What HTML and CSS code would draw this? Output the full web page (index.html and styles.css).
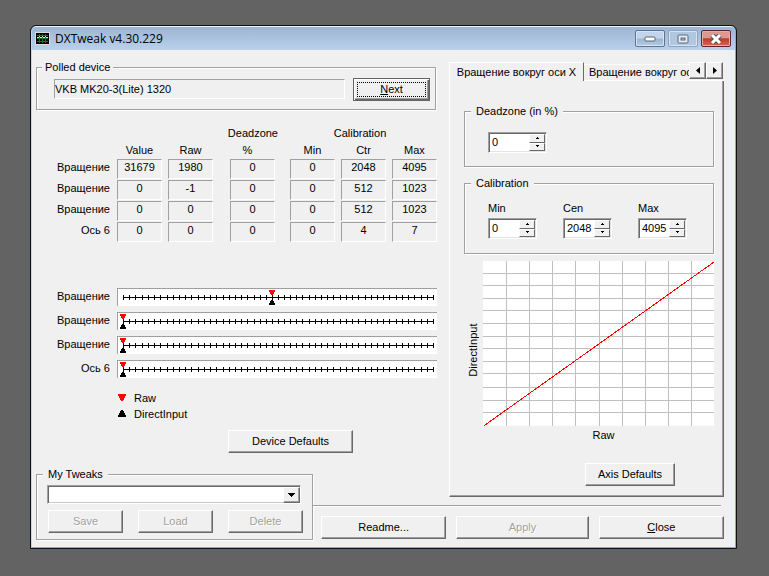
FILE: index.html
```html
<!DOCTYPE html>
<html lang="en">
<head>
<meta charset="utf-8">
<title>DXTweak v4.30.229</title>
<link rel="stylesheet" href="styles.css">
</head>
<body>
<svg class="defs" aria-hidden="true">
  <symbol id="ruler" viewBox="0 0 320 17">
    <g fill="none" stroke="#000" shape-rendering="crispEdges">
      <path d="M5 8.500H317"/>
      <path d="M5.500 6v5M11.500 6v5M17.500 6v5M24.500 6v5M30.500 6v5M36.500 6v5M42.500 6v5M49.500 6v5M55.500 6v5M61.500 6v5M67.500 6v5M73.500 6v5M80.500 6v5M86.500 6v5M92.500 6v5M98.500 6v5M105.500 6v5M111.500 6v5M117.500 6v5M123.500 6v5M129.500 6v5M136.500 6v5M142.500 6v5M148.500 6v5M154.500 6v5M161.500 6v5M167.500 6v5M173.500 6v5M179.500 6v5M185.500 6v5M192.500 6v5M198.500 6v5M204.500 6v5M210.500 6v5M216.500 6v5M223.500 6v5M229.500 6v5M235.500 6v5M241.500 6v5M248.500 6v5M254.500 6v5M260.500 6v5M266.500 6v5M272.500 6v5M279.500 6v5M285.500 6v5M291.500 6v5M297.500 6v5M304.500 6v5M310.500 6v5M316.500 6v5"/>
    </g>
  </symbol>
  <symbol id="markers" viewBox="0 0 7 17">
    <path fill="#f00" shape-rendering="crispEdges" d="M0 1h6v2h-1v2h-1v1h-2v-1h-1v-2h-1z"/>
    <path fill="#000" shape-rendering="crispEdges" d="M2 11h2v1h1v2h1v2h-6v-2h1v-2h1z"/>
  </symbol>
  <symbol id="up" viewBox="0 0 5 3"><path shape-rendering="crispEdges" d="M2 0h1v1h1v1h-3v-1h1z"/></symbol>
  <symbol id="down" viewBox="0 0 5 3"><path shape-rendering="crispEdges" d="M1 0h3v1h-1v1h-1v-1h-1z"/></symbol>
</svg>
<main class="window">
  <header class="titlebar">
    <svg class="app-icon" width="15" height="13" viewBox="0 0 15 13" shape-rendering="crispEdges" aria-hidden="true">
      <path fill="#ddd" d="M0 0h15v13H0z"/><path d="M1 1h13v11H1z"/>
      <path stroke="#0b7a1c" fill="none" d="M4.500 2v9M7.500 2v9M10.500 2v9M2 3.500h11M2 6.500h11M2 9.500h11"/>
      <path stroke="#c7f4c8" fill="none" d="M2 5.500h2M4 4.500h1M5 5.500h2M7 4.500h1M8 5.500h2M10 4.500h1M11 5.500h2"/>
    </svg>
    <h1>DXTweak v4.30.229</h1>
    <div class="controls">
      <button class="ctl" aria-label="Minimize"><svg width="12" height="6" viewBox="0 0 12 6"><rect x="1" y="1" width="10" height="4" rx="1" fill="#fff" stroke="#5b6675"/></svg></button>
      <button class="ctl dim" aria-label="Maximize" disabled><svg width="12" height="10" viewBox="0 0 12 10"><rect x="1" y="1" width="10" height="8" rx="1" fill="#e5ebf3" stroke="#5d6878"/><rect x="4" y="4" width="4" height="2" fill="#a9c0dd" stroke="#5d6878"/></svg></button>
      <button class="ctl close" aria-label="Close window"><svg width="12" height="10" viewBox="0 0 12 10"><path d="M2 1l8 8M10 1l-8 8" stroke="#5d5057" stroke-width="5"/><path d="M2 1l8 8M10 1l-8 8" stroke="#fff" stroke-width="3"/></svg></button>
    </div>
  </header>

  <div class="client">
    <section class="device">
      <fieldset class="polled">
        <legend>Polled device</legend>
        <input class="device-name" aria-label="Polled device" value="VKB MK20-3(Lite) 1320" readonly>
        <button class="btn default"><span class="focus"><u>N</u>ext</span></button>
      </fieldset>

      <table class="axes">
        <colgroup><col><col class="c"><col class="c-raw"><col class="c-dz"><col class="c"><col class="c"><col class="c-last"></colgroup>
        <thead>
          <tr><td></td><td></td><td></td><th>Deadzone</th><th class="group" colspan="3">Calibration</th></tr>
          <tr><td></td><th>Value</th><th>Raw</th><th>%</th><th>Min</th><th>Ctr</th><th>Max</th></tr>
        </thead>
        <tbody>
          <tr><th>Вращение</th><td><span>31679</span></td><td><span>1980</span></td><td><span>0</span></td><td><span>0</span></td><td><span>2048</span></td><td><span>4095</span></td></tr>
          <tr><th>Вращение</th><td><span>0</span></td><td><span>-1</span></td><td><span>0</span></td><td><span>0</span></td><td><span>512</span></td><td><span>1023</span></td></tr>
          <tr><th>Вращение</th><td><span>0</span></td><td><span>0</span></td><td><span>0</span></td><td><span>0</span></td><td><span>512</span></td><td><span>1023</span></td></tr>
          <tr><th>Ось 6</th><td><span>0</span></td><td><span>0</span></td><td><span>0</span></td><td><span>0</span></td><td><span>4</span></td><td><span>7</span></td></tr>
        </tbody>
      </table>

      <div class="rulers">
        <div class="ruler-row"><span>Вращение</span><svg class="ruler" viewBox="0 0 320 17"><use href="#ruler" width="320" height="17"/><use href="#markers" x="151" width="7" height="17"/></svg></div>
        <div class="ruler-row"><span>Вращение</span><svg class="ruler" viewBox="0 0 320 17"><use href="#ruler" width="320" height="17"/><use href="#markers" x="2" width="7" height="17"/></svg></div>
        <div class="ruler-row"><span>Вращение</span><svg class="ruler" viewBox="0 0 320 17"><use href="#ruler" width="320" height="17"/><use href="#markers" x="2" width="7" height="17"/></svg></div>
        <div class="ruler-row"><span>Ось 6</span><svg class="ruler" viewBox="0 0 320 17"><use href="#ruler" width="320" height="17"/><use href="#markers" x="2" width="7" height="17"/></svg></div>
      </div>

      <ul class="key">
        <li><svg width="8" height="7" viewBox="0 0 8 7" shape-rendering="crispEdges"><path fill="#f00" d="M0 0h8v2h-1v2h-1v2h-1v1h-2v-1h-1v-2h-1v-2h-1z"/></svg>Raw</li>
        <li><svg width="8" height="7" viewBox="0 0 8 7" shape-rendering="crispEdges"><path d="M3 0h2v1h1v2h1v2h1v2h-8v-2h1v-2h1v-2h1z"/></svg>DirectInput</li>
      </ul>
      <button class="btn device-defaults">Device Defaults</button>
    </section>

    <section class="axis-tabs">
      <div class="tabs" role="tablist">
        <button class="tab active" role="tab" aria-selected="true">Вращение вокруг оси X</button>
        <button class="tab" role="tab" aria-selected="false">Вращение вокруг оси Y</button>
        <div class="tab-scroll">
          <button aria-label="Previous tabs"><svg width="4" height="7" viewBox="0 0 4 7"><path d="M4 0v7L0 3.500z"/></svg></button>
          <button aria-label="Next tabs"><svg width="4" height="7" viewBox="0 0 4 7"><path d="M0 0v7l4-3.500z"/></svg></button>
        </div>
      </div>
      <div class="panel">
        <fieldset class="deadzone">
          <legend>Deadzone (in %)</legend>
          <div class="spin wide"><input aria-label="Deadzone (in %)" value="0"><div class="arrows"><button aria-label="Increase"><svg width="5" height="3"><use href="#up"/></svg></button><button aria-label="Decrease"><svg width="5" height="3"><use href="#down"/></svg></button></div></div>
        </fieldset>
        <fieldset class="calibration">
          <legend>Calibration</legend>
          <div class="field"><label for="min">Min</label><div class="spin"><input id="min" value="0"><div class="arrows"><button aria-label="Increase min"><svg width="5" height="3"><use href="#up"/></svg></button><button aria-label="Decrease min"><svg width="5" height="3"><use href="#down"/></svg></button></div></div></div>
          <div class="field"><label for="cen">Cen</label><div class="spin"><input id="cen" value="2048"><div class="arrows"><button aria-label="Increase center"><svg width="5" height="3"><use href="#up"/></svg></button><button aria-label="Decrease center"><svg width="5" height="3"><use href="#down"/></svg></button></div></div></div>
          <div class="field"><label for="max">Max</label><div class="spin"><input id="max" value="4095"><div class="arrows"><button aria-label="Increase max"><svg width="5" height="3"><use href="#up"/></svg></button><button aria-label="Decrease max"><svg width="5" height="3"><use href="#down"/></svg></button></div></div></div>
        </fieldset>
        <div class="chart">
          <span class="y-label">DirectInput</span>
          <svg class="plot" viewBox="0 0 230 164">
            <path fill="#fff" d="M0 0h230v164H0z"/>
            <path fill="none" stroke="#c0c0c0" shape-rendering="crispEdges" d="M23.500 0v164M46.500 0v164M69.500 0v164M92.500 0v164M115.500 0v164M138.500 0v164M161.500 0v164M184.500 0v164M207.500 0v164M0 12.500h230M0 24.500h230M0 37.500h230M0 49.500h230M0 62.500h230M0 75.500h230M0 87.500h230M0 100.500h230M0 112.500h230M0 125.500h230M0 138.500h230M0 150.500h230"/>
            <path fill="none" stroke="#f00" shape-rendering="crispEdges" d="M1 164L230 1"/>
          </svg>
          <span class="x-label">Raw</span>
        </div>
        <button class="btn axis-defaults">Axis Defaults</button>
      </div>
    </section>

    <fieldset class="tweaks">
      <legend>My Tweaks</legend>
      <div class="combo">
        <select aria-label="My Tweaks"><option></option></select>
        <span class="drop"><svg width="7" height="4" viewBox="0 0 7 4" shape-rendering="crispEdges"><path d="M0 0h7v1h-1v1h-1v1h-1v1h-1v-1h-1v-1h-1v-1h-1z"/></svg></span>
      </div>
      <div class="tweak-buttons">
        <button class="btn" disabled>Save</button>
        <button class="btn" disabled>Load</button>
        <button class="btn" disabled>Delete</button>
      </div>
    </fieldset>

    <footer class="actions">
      <hr>
      <div class="action-buttons">
        <button class="btn">Readme...</button>
        <button class="btn apply" disabled>Apply</button>
        <button class="btn"><span><u>C</u>lose</span></button>
      </div>
    </footer>
  </div>
</main>
</body>
</html>
```
FILE: styles.css
```css
* { box-sizing: border-box; }

body {
  margin: 0;
  min-height: 100vh;
  padding: 25px 32px 27px 30px;
  display: flex;
  background: #636363;
  color: #000;
  font: 11px/13px "Liberation Sans", Arial, sans-serif;
}

button, input, select { font: inherit; color: inherit; margin: 0; border-radius: 0; }
button { padding: 0; }
svg { display: block; }
.defs { position: absolute; width: 0; height: 0; }

.window {
  flex: 1;
  display: flex;
  flex-direction: column;
  border: 1px solid;
  border-color: #e9f3fc #4fc3ee #4fc3ee #b5dcf5;
  outline: 1px solid #111;
  margin: 1px;
  border-radius: 5px 5px 0 0;
  background: #f0f0f0;
}

.titlebar {
  display: flex;
  align-items: center;
  height: 23px;
  padding: 0 4px 0 3px;
  border-radius: 4px 4px 0 0;
  background: linear-gradient(#9db5d3, #b9d1ea);
}
.titlebar h1 {
  flex: 1;
  margin: 0 0 0 5px;
  font: 12px/20px "Open Sans", "Noto Sans", sans-serif;
}
.controls { display: flex; gap: 3px; }
.ctl {
  width: 30px;
  height: 17px;
  display: grid;
  place-items: center;
  border: 1px solid #5d7391;
  border-radius: 2px;
  background: linear-gradient(#c3d5ea 48%, #9bb4d2 52%, #b6cde6);
  box-shadow: inset 0 0 0 1px #d6e4f3;
}
.ctl.dim { border-color: #8ba4c2; background: #b0c7e0; }
.ctl.close {
  border-color: #5a2630;
  background: linear-gradient(#dc9a8e 45%, #bd3a2a 52%, #d66a50);
  box-shadow: inset 0 0 0 1px #e5aca3;
}

.client {
  flex: 1;
  display: grid;
  grid-template-columns: 277fr 136fr 275fr;
  grid-template-rows: 407px 29px 1fr;
  padding: 11px 11px 7px 4px;
}

fieldset {
  min-width: 0;
  margin: 0;
  border: 1px solid #a0a0a0;
  box-shadow: 1px 1px 0 #fff, inset 1px 1px 0 #fff;
}
legend { padding: 0 3px; background: #f0f0f0; }

.btn {
  height: 23px;
  border: 1px solid;
  border-color: #fff #696969 #696969 #fff;
  box-shadow: inset -1px -1px 0 #a0a0a0;
  background: #f0f0f0;
}
.btn:disabled { color: #a0a0a0; text-shadow: 1px 1px 0 #fff; }

/* Device column */
.device { grid-area: 1 / 1 / 2 / 3; display: flex; flex-direction: column; margin-right: 12px; }
.polled { display: flex; align-items: flex-start; padding: 4px 5px 8px 17px; margin-right: 1px; }
.polled legend { margin-left: -12px; }
.device-name {
  flex: 1;
  min-width: 0;
  height: 20px;
  margin-top: 1px;
  padding: 0 0 1px;
  border: 1px solid;
  border-color: #a0a0a0 #fff #fff #a0a0a0;
  background: #f0f0f0;
}
.btn.default {
  width: 77px;
  margin-left: 8px;
  padding: 2px;
  border-color: #646464;
  box-shadow: inset 1px 1px 0 #fff, inset -1px -1px 0 #696969, inset -2px -2px 0 #a0a0a0;
}
.focus { display: block; margin: 0 1px 1px; border: 1px dotted #000; }

.axes { width: 100%; margin-top: 15px; table-layout: fixed; border-collapse: collapse; }
.axes .c { width: 51px; }
.axes .c-raw { width: 62px; }
.axes .c-dz { width: 60px; }
.axes .c-last { width: 45px; }
.axes th { font-weight: normal; }
.axes th, .axes td { padding: 0 6px 0 0; text-align: center; vertical-align: top; white-space: nowrap; }
.axes tr > :nth-child(3) { padding-right: 17px; }
.axes tr > :nth-child(4) { padding-right: 15px; }
.axes tr > :nth-child(7) { padding-right: 0; }
.axes thead tr { height: 17px; line-height: 17px; }
.axes thead tr > :nth-child(4) { padding-right: 25px; }
.axes thead tr:first-child > :nth-child(4) { direction: rtl; padding-right: 12px; }
.axes thead .group { padding-right: 7px; }
.axes tbody tr { height: 21px; }
.axes tbody th { padding-right: 7px; text-align: right; line-height: 17px; }
.axes span {
  display: block;
  height: 20px;
  line-height: 15px;
  border: 1px solid;
  border-color: #a0a0a0 #fff #fff #a0a0a0;
}

.rulers { display: grid; gap: 6px; margin-top: 45px; }
.ruler-row { display: grid; grid-template-columns: 74px 1fr; gap: 7px; align-items: center; text-align: right; }
.ruler { width: 100%; border: 1px solid #a0a0a0; border-width: 1px 0 0 1px; background: #fff; }

.key { list-style: none; margin: 12px 0 0 82px; padding: 0; line-height: 16px; }
.key li { display: flex; align-items: center; gap: 8px; }
.device-defaults { width: 125px; margin: 8px 0 0 192px; }

/* Axis tabs */
.axis-tabs { grid-area: 1 / 3 / 3 / 4; display: flex; flex-direction: column; margin-top: 1px; }
.tabs { display: flex; height: 19px; position: relative; overflow: hidden; }
.tab { border: 0; background: none; white-space: nowrap; }
.tab.active {
  flex: none;
  width: 135px;
  border: 1px solid;
  border-color: #fff #696969 transparent #fff;
  border-bottom: 0;
}
.tab:not(.active) { flex: 1; min-width: 0; margin-top: 2px; padding-left: 5px; text-align: left; overflow: hidden; border-top: 1px solid #fff; border-bottom: 1px solid #fff; }
.tab-scroll { position: absolute; right: 1px; top: 0; display: flex; }
.tab-scroll button {
  width: 17px;
  height: 17px;
  display: grid;
  place-items: center;
  border: 1px solid;
  border-color: #fff #696969 #696969 #fff;
  background: #f0f0f0;
  box-shadow: inset -1px -1px 0 #a0a0a0;
}
.panel {
  flex: 1;
  padding: 24px 9px 10px 14px;
  border: 1px solid;
  border-color: transparent #696969 #696969 #fff;
  border-top: 0;
  box-shadow: inset -1px -1px 0 #a0a0a0;
}
.panel legend { margin-left: -17px; padding: 0 5px; }
.deadzone { padding: 14px 23px 13px; }
.calibration { display: flex; gap: 26px; margin-top: 10px; padding: 12px 23px 14px; }
.field { display: grid; gap: 3px; }
.spin {
  display: flex;
  width: 49px;
  height: 21px;
  border: 1px solid;
  border-color: #a0a0a0 #fff #fff #a0a0a0;
  box-shadow: inset 1px 1px 0 #696969, inset -1px -1px 0 #e3e3e3;
  padding: 1px;
  background: #fff;
}
.spin.wide { width: 59px; }
.spin input { flex: 1; min-width: 0; border: 0; padding: 0 0 0 2px; background: none; }
.arrows { display: grid; grid-template-rows: 1fr 1fr; width: 16px; }
.arrows button {
  display: grid;
  place-items: center;
  min-height: 0;
  border: 1px solid;
  border-color: #fff #696969 #696969 #fff;
  background: #f0f0f0;
}

.chart { display: grid; grid-template-columns: 16px 1fr; column-gap: 3px; margin-top: 7px; }
.y-label { justify-self: end; writing-mode: vertical-rl; transform: rotate(180deg); text-align: center; margin-top: 14px; }
.plot { width: 100%; }
.x-label { grid-column: 2; margin: 3px 0 0 10px; text-align: center; }
.axis-defaults { display: block; width: 90px; margin: 21px 39px 0 auto; }

/* Saved tweaks */
.tweaks { grid-area: 2 / 1 / 4 / 2; padding: 4px 9px 6px 10px; }
.tweaks legend { margin-left: -4px; padding: 0 5px; }
.combo { position: relative; margin-right: 2px; }
.combo select {
  display: block;
  width: 100%;
  height: 19px;
  appearance: none;
  border: 1px solid;
  border-color: #a0a0a0 #fff #fff #a0a0a0;
  box-shadow: inset 1px 1px 0 #696969, inset -1px -1px 0 #c8c8c8;
  background: #fff;
}
.drop {
  position: absolute;
  top: 2px;
  right: 1px;
  bottom: 1px;
  width: 17px;
  display: grid;
  place-items: center;
  border: 1px solid;
  border-color: #fff #696969 #696969 #fff;
  box-shadow: inset -1px -1px 0 #a0a0a0;
  background: #f0f0f0;
  pointer-events: none;
}
.tweak-buttons { display: flex; gap: 15px; margin: 6px 0 0 1px; }
.tweak-buttons .btn { flex: 1; }

/* Footer */
.actions { grid-area: 3 / 2 / 4 / 4; padding-top: 8px; }
hr { margin: 0 3px 0 0; border: 0; border-top: 1px solid #a0a0a0; border-bottom: 1px solid #fff; }
.action-buttons { display: flex; gap: 10px; margin: 9px 0 0 8px; }
.action-buttons .btn { flex: 125; }
.action-buttons .apply { flex: 132; }
```
